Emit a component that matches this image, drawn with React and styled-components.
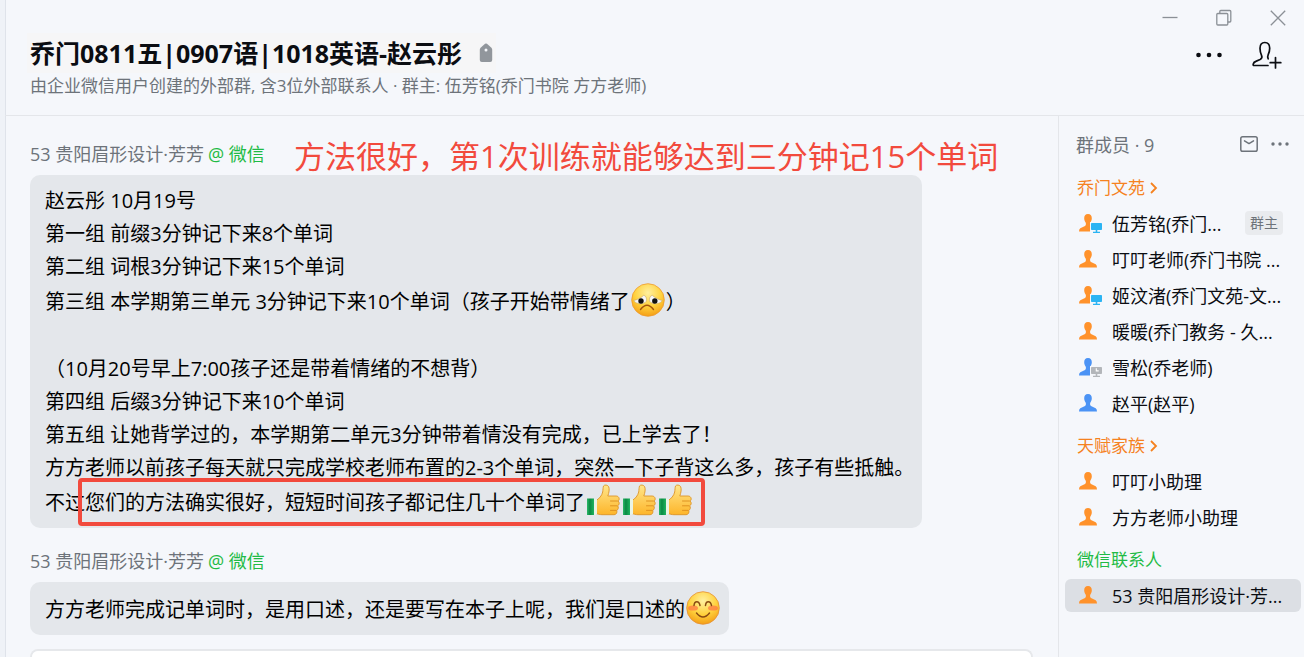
import React from 'react'
import styled, { createGlobalStyle } from 'styled-components';

const colors = {
    page: "#f5f7fb",
    strip: "#eff2f7",
    line: "#e4e6ea",
    bubble: "#e4e7eb",
    text: "#0b0d12",
    muted: "#6d737a",
    orange: "#f5821f",
    green: "#1fbb45",
    red: "#f24a3d",
    selected: "#dcdfe4",
}

const GlobalStyle = createGlobalStyle`
    *, *::before, *::after {
        box-sizing: border-box;
    }
    body {
        margin: 0;
        background: ${colors.page};
        color: ${colors.text};
        font-family: "Open Sans", "Noto Sans CJK SC", sans-serif;
        overflow: hidden;
    }
    button, textarea {
        font: inherit;
        color: inherit;
    }
    svg {
        display: block;
        flex: none;
    }
`

const Window = styled.div`
    display: flex;
    flex-direction: column;
    height: 100vh;
    border-left: 5px solid ${colors.strip};
    box-shadow: inset 1px 0 0 #dfe3ea;
`

const Header = styled.header`
    display: flex;
    justify-content: space-between;
    height: 116px;
    flex: none;
    border-bottom: 1px solid ${colors.line};
`

const Heading = styled.div`
    padding: 33px 0 0 22px;
    white-space: nowrap;
`

const TitleRow = styled.div`
    display: flex;
    align-items: center;
    gap: 17px;
    width: fit-content;
    padding: 2px 3px;
    background: #f6f6f7;
`

const Title = styled.h1`
    margin: 0;
    font-size: 25px;
    line-height: 36px;
    font-weight: 700;
`

const Subtitle = styled.p`
    margin: 0 3px;
    font-size: 17px;
    line-height: 26px;
    color: ${colors.muted};
`

const HeaderSide = styled.div`
    display: flex;
    flex-direction: column;
    align-items: flex-end;
    padding: 8px 18px 0 0;
    gap: 13px;
`

const ButtonRow = styled.div`
    display: flex;
    align-items: center;
    gap: ${(props) => props.$gap}px;
`

const HeaderActions = styled(ButtonRow)`
    padding-right: 4px;
`

const IconButton = styled.button`
    display: flex;
    padding: 0;
    border: 0;
    background: none;
    color: ${(props) => props.$color || colors.text};
    cursor: pointer;
`

const Body = styled.div`
    display: flex;
    flex: 1;
    min-height: 0;
`

const Chat = styled.main`
    position: relative;
    display: flex;
    flex-direction: column;
    flex: 1;
    min-width: 0;
    padding: 25px 25px 0;
`

const Message = styled.article`
    display: flex;
    flex-direction: column;
    align-items: flex-start;
    gap: 8px;
    margin-bottom: ${(props) => (props.$last ? 14 : 20)}px;
`

const Sender = styled.div`
    font-size: 18px;
    line-height: 26px;
    color: ${colors.muted};
    white-space: nowrap;
    span {
        margin-left: 4px;
        color: ${colors.green};
    }
`

const Bubble = styled.div`
    padding: 8px 8px 9px 15px;
    border-radius: 10px;
    background: ${colors.bubble};
    color: #000;
    font-size: 20px;
`

const Line = styled.p`
    position: relative;
    display: flex;
    align-items: center;
    margin: 0;
    height: ${(props) => (props.$emoji ? 36 : 33)}px;
    white-space: pre;
    svg {
        margin: 0 1px;
    }
`

const Highlight = styled.span`
    position: absolute;
    top: -5px;
    left: 33px;
    width: 627px;
    height: 48px;
    border: 4px solid ${colors.red};
    border-radius: 4px;
`

const Note = styled.p`
    position: absolute;
    top: 17px;
    left: 289px;
    margin: 0;
    font-size: 31px;
    line-height: 46px;
    color: ${colors.red};
    white-space: nowrap;
`

const Composer = styled.textarea`
    flex: 1;
    min-height: 0;
    padding: 0 12px;
    border: 2px solid #e6e8eb;
    border-bottom: 0;
    border-radius: 12px 12px 0 0;
    background: #fff;
    resize: none;
    outline: none;
`

const Sidebar = styled.aside`
    width: 246px;
    flex: none;
    border-left: 1px solid ${colors.line};
    padding: 13px 3px 0 6px;
`

const SidebarTop = styled.div`
    display: flex;
    align-items: center;
    justify-content: space-between;
    height: 33px;
    padding: 0 12px 4px 11px;
    font-size: 18px;
    color: ${colors.muted};
`

const GroupTitle = styled.h2`
    display: flex;
    align-items: center;
    gap: 5px;
    margin: 0;
    padding: 13px 0 6px 12px;
    font-size: 17px;
    line-height: 26px;
    font-weight: 400;
    color: ${(props) => props.$color};
`

const MemberList = styled.ul`
    display: flex;
    flex-direction: column;
    gap: 3px;
    margin: 0;
    padding: 0;
    list-style: none;
`

const Member = styled.li`
    display: flex;
    align-items: center;
    gap: 9px;
    height: 33px;
    padding: 0 18px 2px 14px;
    border-radius: 6px;
    background: ${(props) => (props.$selected ? colors.selected : "transparent")};
    font-size: 18px;
    white-space: nowrap;
`

const OwnerBadge = styled.span`
    margin-left: auto;
    padding: 0 5px;
    border-radius: 4px;
    background: #e9ebee;
    color: ${colors.muted};
    font-size: 14px;
    line-height: 24px;
`

const TagIcon = () => (
    <svg width="14" height="20" viewBox="0 0 14 20">
        <path d="M6 .8q1-.8 2 0l4.400 4q.8.800.8 2v10.200q0 2-2 2H2.800q-2 0-2-2V6.800q0-1.200.8-2z" fill="#91969c" />
        <circle cx="7" cy="7" r="1.500" fill="#f5f7fb" />
    </svg>
)

const DotsIcon = ({ width, step, r }) => (
    <svg width={width} height="16" viewBox={`0 0 ${width} 16`} fill="currentColor">
        <circle cx={width / 2 - step} cy="8" r={r} />
        <circle cx={width / 2} cy="8" r={r} />
        <circle cx={width / 2 + step} cy="8" r={r} />
    </svg>
)

const AddPersonIcon = () => (
    <svg width="30" height="28" viewBox="0 0 30 28" fill="none" stroke="currentColor" strokeWidth="1.700" strokeLinecap="round" strokeLinejoin="round">
        <path d="M16 24.500H2.200q-1.300 0-1-1.400.4-1.800 2.600-2.700l4.300-1.900q2.600-1.300 1.500-3.800C8.600 12.400 8 9.800 8 7.200c0-3.700 2-5.700 4.800-5.700s4.900 2 4.900 5.700c0 2.400-.6 4.500-1.500 6.400-.8 1.800-.7 2.900 0 4.200" />
        <path d="M23.500 16.500v10.500M18.200 21.700h10.600" />
    </svg>
)

const MinimizeIcon = () => (
    <svg width="16" height="20" viewBox="0 0 16 20" stroke="currentColor" strokeWidth="1.300">
        <path d="M.5 9.500h15" />
    </svg>
)

const RestoreIcon = () => (
    <svg width="16" height="20" viewBox="0 0 16 20" fill="none" stroke="currentColor" strokeWidth="1.300">
        <rect x=".8" y="5.500" width="11" height="11.500" rx="1" />
        <path d="M3.800 5.500V3.500q0-1 1-1h9q1 0 1 1v9.500q0 1-1 1h-2" />
    </svg>
)

const CloseIcon = () => (
    <svg width="16" height="20" viewBox="0 0 16 20" stroke="currentColor" strokeWidth="1.300">
        <path d="M.8 2.800l14.400 14.400M15.200 2.800L.8 17.200" />
    </svg>
)

const MailIcon = () => (
    <svg width="18" height="16" viewBox="0 0 18 16" fill="none" stroke="currentColor" strokeWidth="1.500" strokeLinecap="round" strokeLinejoin="round">
        <rect x=".8" y=".8" width="16.400" height="14.400" rx="1.800" />
        <path d="M4.500 4.800L9 7.600l4.500-2.800" />
    </svg>
)

const ChevronIcon = () => (
    <svg width="8" height="12" viewBox="0 0 8 12" fill="none" stroke="currentColor" strokeWidth="1.800">
        <path d="M1 1l5 5-5 5" />
    </svg>
)

const personColors = { orange: "#ff922b", blue: "#4b93f5" }

const PersonIcon = ({ color, device }) => (
    <svg width="24" height="22" viewBox="0 0 24 22">
        <path
            d="M9 2C6.300 2 5.200 3.800 5.200 6.200c0 1.800.6 3 1.300 4 .7 1.300.6 3-.5 3.700L1.300 16.300Q0 17 0 19.500h18q0-2.500-1.300-3.200L12 13.900c-1.100-.7-1.200-2.400-.5-3.700.7-1 1.300-2.200 1.300-4C12.800 3.800 11.700 2 9 2z"
            fill={personColors[color]}
        />
        {device && (
            <g>
                <path d="M11 10H24v12H11z" fill={colors.page} />
                <path d="M12.800 11h9.400q.8 0 .8.800v5.400q0 .8-.8.8h-3.900v1.800h2.700v1.200h-7v-1.200h2.700V18h-3.900q-.8 0-.8-.8v-5.400q0-.8.8-.8z" fill={device === "on" ? "#2bb4f3" : "#b3b6ba"} />
                {device === "away" && <path d="M17.300 12.200v2.700h2.400" fill="none" stroke="#fff" strokeWidth="1.100" />}
            </g>
        )}
    </svg>
)

const FaceGradient = ({ id }) => (
    <radialGradient id={id} cx="50%" cy="28%" r="75%">
        <stop offset="0" stopColor="#fff0a0" />
        <stop offset=".55" stopColor="#ffd23e" />
        <stop offset="1" stopColor="#f39a12" />
    </radialGradient>
)

const SadFace = () => (
    <svg width="34" height="34" viewBox="0 0 34 34" role="img" aria-label="难过">
        <defs><FaceGradient id="sad" /></defs>
        <circle cx="17" cy="17" r="16.300" fill="url(#sad)" stroke="#ee9a2e" strokeWidth=".8" />
        <path d="M2.800 17.500c2-.3 7.500-2.600 10-5.300 2.500.8 3.400 4.300 2.300 6.300-2 3.200-10.500 3-12.300-1zM31.200 17.500c-2-.3-7.500-2.600-10-5.300-2.500.8-3.400 4.300-2.300 6.300 2 3.200 10.500 3 12.300-1z" fill="#f7f7f7" stroke="#c9a765" strokeWidth=".6" />
        <circle cx="10" cy="18" r="2.700" fill="#111" />
        <circle cx="23.800" cy="18" r="2.700" fill="#111" />
        <path d="M9.500 26.500q6.500-8.500 13 0" fill="none" stroke="#a4560c" strokeWidth="1.400" strokeLinecap="round" />
    </svg>
)

const SmileFace = () => (
    <svg width="34" height="34" viewBox="0 0 34 34" role="img" aria-label="愉快">
        <defs><FaceGradient id="smile" /></defs>
        <circle cx="17" cy="17" r="16.300" fill="url(#smile)" stroke="#e58f35" strokeWidth=".8" />
        <ellipse cx="7" cy="17" rx="5" ry="2.600" fill="#ff7a45" opacity=".75" />
        <ellipse cx="27" cy="17" rx="5" ry="2.600" fill="#ff7a45" opacity=".75" />
        <path d="M8 14.500c.5-5 5-5 6 0M19.500 14.500c.5-5 5-5 6 0M10.500 22q6.500 8 13 0" fill="none" stroke="#8a4b12" strokeWidth="1.500" strokeLinecap="round" />
    </svg>
)

const ThumbUp = ({ id }) => (
    <svg width="34" height="34" viewBox="0 0 34 34" role="img" aria-label="强">
        <defs>
            <linearGradient id={`${id}-hand`} x1="0" y1="0" x2="0" y2="1">
                <stop offset="0" stopColor="#ffe68a" />
                <stop offset="1" stopColor="#fdb52a" />
            </linearGradient>
            <linearGradient id={`${id}-cuff`} x1="0" y1="0" x2="1" y2="0">
                <stop offset="0" stopColor="#2cb868" />
                <stop offset=".4" stopColor="#0a8a43" />
                <stop offset="1" stopColor="#1fb35f" />
            </linearGradient>
        </defs>
        <path
            d="M10 16.500c3-1.500 6-5 6.700-8.500.3-2 .3-4.500.8-6 .9-1.500 4.300-1.300 5.200.8.900 2.300.4 5.700-.9 9.200h8.400c3.300.2 3.800 4 1.800 5 1.800 1.100 1.500 4.100-.3 4.800 1.100 1.300.7 4-1 4.600.8 1.800-.3 4.300-2.600 4.300H16c-2.500 0-4-.8-6-1z"
            fill={`url(#${id}-hand)`}
            stroke="#dc9428"
            strokeWidth=".9"
        />
        <path d="M24.500 17h7M24.500 21.800h6.500M24.500 26.400h5.500" stroke="#dc8d1c" strokeWidth=".9" strokeLinecap="round" />
        <path d="M1 14.500H8V31H1z" fill={`url(#${id}-cuff)`} />
        <path d="M8 15h3V30.500H8z" fill="#eaf4e6" />
    </svg>
)

const groups = [
    {
        name: "乔门文苑",
        color: colors.orange,
        open: true,
        members: [
            { name: "伍芳铭(乔门...", icon: "orange", device: "on", owner: true },
            { name: "叮叮老师(乔门书院 ...", icon: "orange" },
            { name: "姬汶渚(乔门文苑-文...", icon: "orange", device: "on" },
            { name: "暖暖(乔门教务 - 久...", icon: "orange" },
            { name: "雪松(乔老师)", icon: "blue", device: "away" },
            { name: "赵平(赵平)", icon: "blue" },
        ],
    },
    {
        name: "天赋家族",
        color: colors.orange,
        open: true,
        members: [
            { name: "叮叮小助理", icon: "orange" },
            { name: "方方老师小助理", icon: "orange" },
        ],
    },
    {
        name: "微信联系人",
        color: colors.green,
        members: [
            { name: "53 贵阳眉形设计·芳...", icon: "orange", selected: true },
        ],
    },
]

const SenderName = () => (
    <Sender>53 贵阳眉形设计·芳芳<span>@ 微信</span></Sender>
)

export default function App() {
  return (
    <Window>
        <GlobalStyle />
        <Header>
            <Heading>
                <TitleRow>
                    <Title>乔门0811五|0907语|1018英语-赵云彤</Title>
                    <TagIcon />
                </TitleRow>
                <Subtitle>由企业微信用户创建的外部群, 含3位外部联系人 · 群主: 伍芳铭(乔门书院 方方老师)</Subtitle>
            </Heading>
            <HeaderSide>
                <ButtonRow $gap={38}>
                    <IconButton $color="#8b9096" aria-label="最小化"><MinimizeIcon /></IconButton>
                    <IconButton $color="#8b9096" aria-label="还原"><RestoreIcon /></IconButton>
                    <IconButton $color="#8b9096" aria-label="关闭"><CloseIcon /></IconButton>
                </ButtonRow>
                <HeaderActions $gap={29}>
                    <IconButton aria-label="更多"><DotsIcon width={28} step={10.5} r={2.3} /></IconButton>
                    <IconButton aria-label="添加成员"><AddPersonIcon /></IconButton>
                </HeaderActions>
            </HeaderSide>
        </Header>
        <Body>
            <Chat>
                <Message>
                    <SenderName />
                    <Bubble>
                        <Line>赵云彤 10月19号</Line>
                        <Line>第一组 前缀3分钟记下来8个单词</Line>
                        <Line>第二组 词根3分钟记下来15个单词</Line>
                        <Line $emoji>第三组 本学期第三单元 3分钟记下来10个单词（孩子开始带情绪了<SadFace />）</Line>
                        <Line />
                        <Line>（10月20号早上7:00孩子还是带着情绪的不想背）</Line>
                        <Line>第四组 后缀3分钟记下来10个单词</Line>
                        <Line>第五组 让她背学过的，本学期第二单元3分钟带着情没有完成，已上学去了！</Line>
                        <Line>方方老师以前孩子每天就只完成学校老师布置的2-3个单词，突然一下子背这么多，孩子有些抵触。</Line>
                        <Line $emoji>
                            不过您们的方法确实很好，短短时间孩子都记住几十个单词了
                            <ThumbUp id="t1" />
                            <ThumbUp id="t2" />
                            <ThumbUp id="t3" />
                            <Highlight />
                        </Line>
                    </Bubble>
                </Message>
                <Message $last>
                    <SenderName />
                    <Bubble>
                        <Line $emoji>方方老师完成记单词时，是用口述，还是要写在本子上呢，我们是口述的<SmileFace /></Line>
                    </Bubble>
                </Message>
                <Composer aria-label="输入消息" />
                <Note>方法很好，第1次训练就能够达到三分钟记15个单词</Note>
            </Chat>
            <Sidebar>
                <SidebarTop>
                    群成员 · 9
                    <ButtonRow $gap={13}>
                        <IconButton $color={colors.muted} aria-label="群邮件"><MailIcon /></IconButton>
                        <IconButton $color={colors.muted} aria-label="更多成员操作"><DotsIcon width={18} step={7} r={1.7} /></IconButton>
                    </ButtonRow>
                </SidebarTop>
                {groups.map((group) => (
                    <section key={group.name}>
                        <GroupTitle $color={group.color}>
                            {group.name}
                            {group.open && <ChevronIcon />}
                        </GroupTitle>
                        <MemberList>
                            {group.members.map((member) => (
                                <Member key={member.name} $selected={member.selected}>
                                    <PersonIcon color={member.icon} device={member.device} />
                                    {member.name}
                                    {member.owner && <OwnerBadge>群主</OwnerBadge>}
                                </Member>
                            ))}
                        </MemberList>
                    </section>
                ))}
            </Sidebar>
        </Body>
    </Window>
  )
}
